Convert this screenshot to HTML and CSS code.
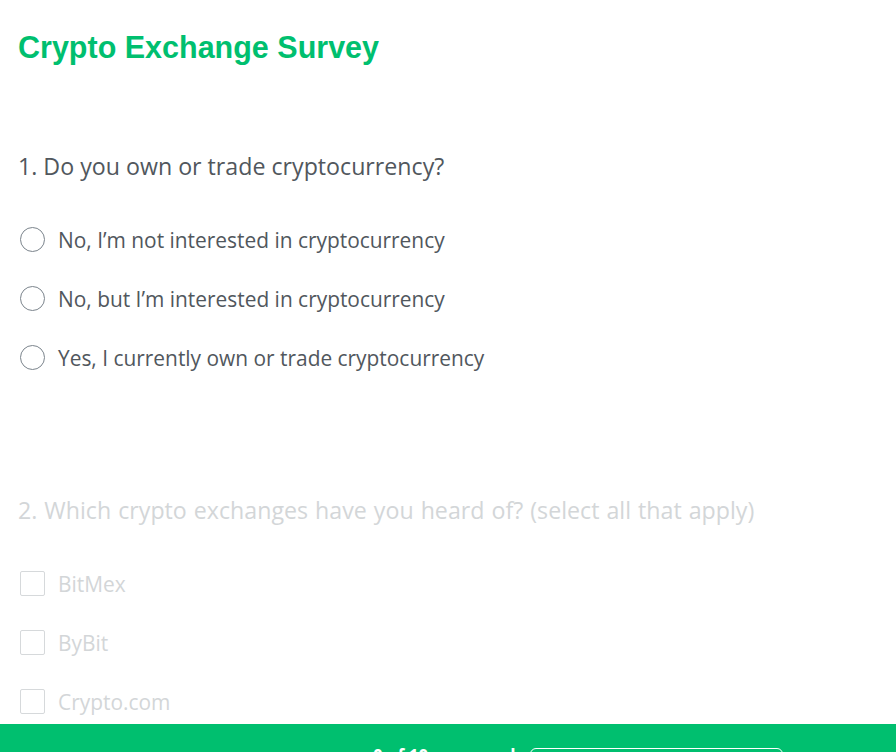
FILE: index.html
```html
<!DOCTYPE html>
<html lang="en">
<head>
    <meta charset="UTF-8">
    <meta name="viewport" content="width=device-width, initial-scale=1.0">
    <title>Crypto Exchange Survey</title>
    <link rel="stylesheet" href="styles.css">
</head>
<body>
    <div class="survey">
        <h1 class="survey-title">Crypto Exchange Survey</h1>

        <div class="question">
            <h2 class="question-title">1. Do you own or trade cryptocurrency?</h2>
            <label class="answer"><span class="radio"></span>No, I’m not interested in cryptocurrency</label>
            <label class="answer"><span class="radio"></span>No, but I’m interested in cryptocurrency</label>
            <label class="answer"><span class="radio"></span>Yes, I currently own or trade cryptocurrency</label>
        </div>

        <div class="question question-inactive">
            <h2 class="question-title">2. Which crypto exchanges have you heard of? (select all that apply)</h2>
            <label class="answer"><span class="checkbox"></span>BitMex</label>
            <label class="answer"><span class="checkbox"></span>ByBit</label>
            <label class="answer"><span class="checkbox"></span>Crypto.com</label>
        </div>
    </div>

    <div class="progress-footer">
        <span class="progress-text">0 of 10 answered</span>
        <div class="progress-bar"></div>
    </div>
</body>
</html>
```

FILE: styles.css
```css
body {
    margin: 0;
    padding: 0;
    font-family: 'Open Sans', 'Liberation Sans', sans-serif;
    color: #51575d;
    background: #fff;
    overflow: hidden;
}

.survey {
    padding: 30px 18px 0;
}

.survey-title {
    margin: 0;
    font-family: 'Liberation Sans', Arial, sans-serif;
    font-size: 30.5px;
    font-weight: bold;
    color: #00bf6f;
}

.question {
    margin-top: 86px;
}

.question + .question {
    margin-top: 108px;
}

.question-title {
    margin: 0 0 29px;
    font-size: 23.2px;
    font-weight: 400;
    line-height: 30px;
}

.question-inactive .question-title {
    word-spacing: 1px;
}

.answer {
    display: flex;
    align-items: center;
    gap: 13px;
    height: 59px;
    padding-left: 2px;
    font-size: 20.9px;
    font-weight: 400;
}

.radio {
    width: 25px;
    height: 25px;
    border: 1px solid #7b848c;
    border-radius: 50%;
    box-sizing: border-box;
}

.checkbox {
    width: 25px;
    height: 25px;
    border: 1px solid #d6d9db;
    border-radius: 2px;
    box-sizing: border-box;
}

.question-inactive {
    color: #d3d6d8;
}

.progress-footer {
    position: fixed;
    left: 0;
    right: 0;
    bottom: -34px;
    height: 62px;
    display: flex;
    align-items: center;
    padding-left: 373px;
    gap: 14px;
    background: #00bf6f;
    color: #fff;
}

.progress-text {
    font-size: 17px;
    font-weight: 700;
}

.progress-bar {
    width: 251px;
    height: 12px;
    border: 1px solid #fff;
    border-radius: 6px;
}
```
